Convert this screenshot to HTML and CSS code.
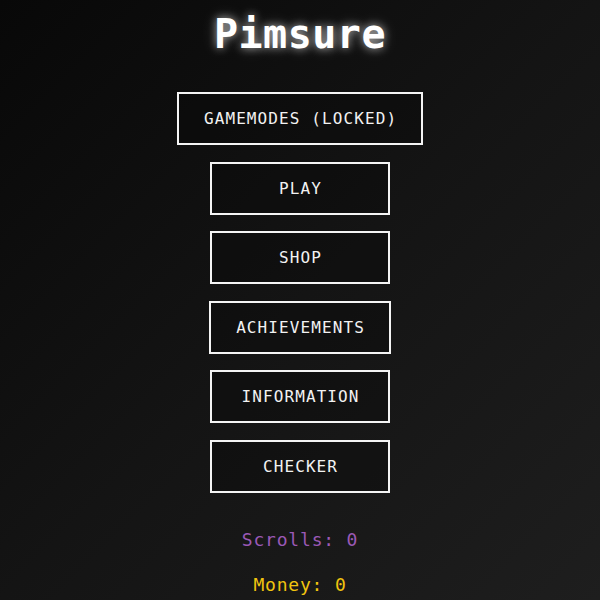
FILE: index.html
```html
<!DOCTYPE html>
<html>
<head>
<meta charset="utf-8">
<link rel="stylesheet" href="styles.css">
</head>
<body>
<main class="menu">
  <h1 class="title">Pimsure</h1>
  <div class="buttons">
    <button class="btn">GAMEMODES (LOCKED)</button>
    <button class="btn">PLAY</button>
    <button class="btn">SHOP</button>
    <button class="btn">ACHIEVEMENTS</button>
    <button class="btn">INFORMATION</button>
    <button class="btn">CHECKER</button>
  </div>
  <div class="stats">
    <div class="stat scrolls">Scrolls: 0</div>
    <div class="stat money">Money: 0</div>
  </div>
</main>
</body>
</html>
```

FILE: styles.css
```css
html, body {
  margin: 0;
  height: 100%;
}
body {
  background: linear-gradient(135deg, #080808 0%, #141414 50%, #1e1e1e 100%);
  color: #fff;
  font-family: "DejaVu Sans Mono", "Liberation Mono", monospace;
  overflow: hidden;
}
.menu {
  display: flex;
  flex-direction: column;
  align-items: center;
}
.title {
  margin: 10px 0 0 0;
  font-size: 40px;
  line-height: 48px;
  font-weight: bold;
  letter-spacing: 0.5px;
  color: #fff;
  text-shadow: 0 0 8px rgba(255,255,255,0.6), 0 0 16px rgba(255,255,255,0.25);
}
.buttons {
  margin-top: 34px;
  display: flex;
  flex-direction: column;
  align-items: center;
  gap: 16.5px;
}
.btn {
  box-sizing: border-box;
  min-width: 180px;
  height: 53px;
  padding: 0 24px;
  background: rgba(10,10,10,0.35);
  border: 2px solid #f4f4f4;
  color: #f2f2f2;
  font-family: "DejaVu Sans Mono", "Liberation Mono", monospace;
  font-size: 16px;
  letter-spacing: 1.1px;
  text-indent: 1.1px;
  cursor: pointer;
}
.stats {
  margin-top: 35px;
  display: flex;
  flex-direction: column;
  align-items: center;
  gap: 21px;
}
.stat {
  font-size: 18px;
  line-height: 24px;
  letter-spacing: 0.8px;
}
.scrolls {
  color: #9b59b6;
}
.money {
  color: #f1c40f;
}
```
